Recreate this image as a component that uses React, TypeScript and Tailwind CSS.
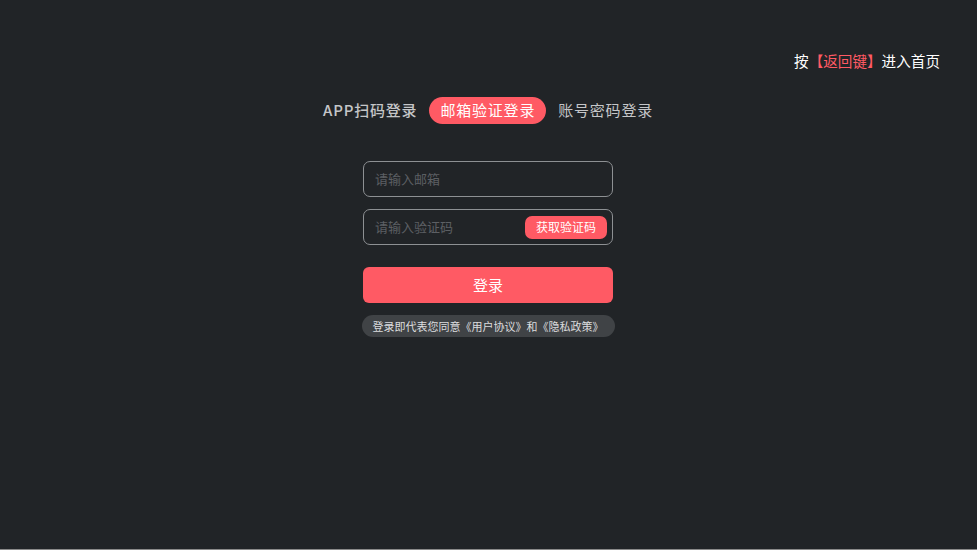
import React from "react";

export default function App() {
  return (
    <div
      className="w-[977px] h-[550px] bg-[#212427] border-b border-[#8a8a8a] flex flex-col"
      style={{ fontFamily: '"Noto Sans CJK SC", "Noto Sans", sans-serif' }}
    >
      <div className="flex justify-end pt-[50px] pr-[37px] text-[14.6px] leading-[22px] text-white">
        <span>按</span>
        <span className="text-[#ff5a64]">【返回键】</span>
        <span>进入首页</span>
      </div>
      <div className="flex justify-center items-center gap-[12px] mt-[25px] pr-[1px] text-[15px] text-[#c5c6c8] tracking-[0.8px]">
        <span className="font-medium">APP扫码登录</span>
        <span className="h-[27px] px-[11px] flex items-center rounded-full bg-[#ff5a64] text-white">邮箱验证登录</span>
        <span>账号密码登录</span>
      </div>
      <div className="flex flex-col items-center mt-[37px] pr-[1px]">
        <div className="w-[250px] h-[36px] rounded-[7px] border-[1.5px] border-[#8d9093] flex items-center px-[11px] text-[13px] text-[#5c5f63]">
          请输入邮箱
        </div>
        <div className="w-[250px] h-[36px] mt-[12px] rounded-[7px] border-[1.5px] border-[#8d9093] flex items-center justify-between pl-[11px] pr-[5px] text-[13px] text-[#5c5f63]">
          <span>请输入验证码</span>
          <span className="h-[23px] px-[11px] flex items-center rounded-[7px] bg-[#ff5a64] text-white text-[12px]">获取验证码</span>
        </div>
        <div className="w-[250px] h-[36px] mt-[22px] rounded-[6px] bg-[#ff5a64] flex items-center justify-center text-white text-[15px]">
          登录
        </div>
        <div className="w-[253px] h-[22px] mt-[12px] rounded-full bg-[#404346] flex items-center justify-center text-[11px] text-[#dcdddf]">
          登录即代表您同意《用户协议》和《隐私政策》
        </div>
      </div>
    </div>
  );
}
